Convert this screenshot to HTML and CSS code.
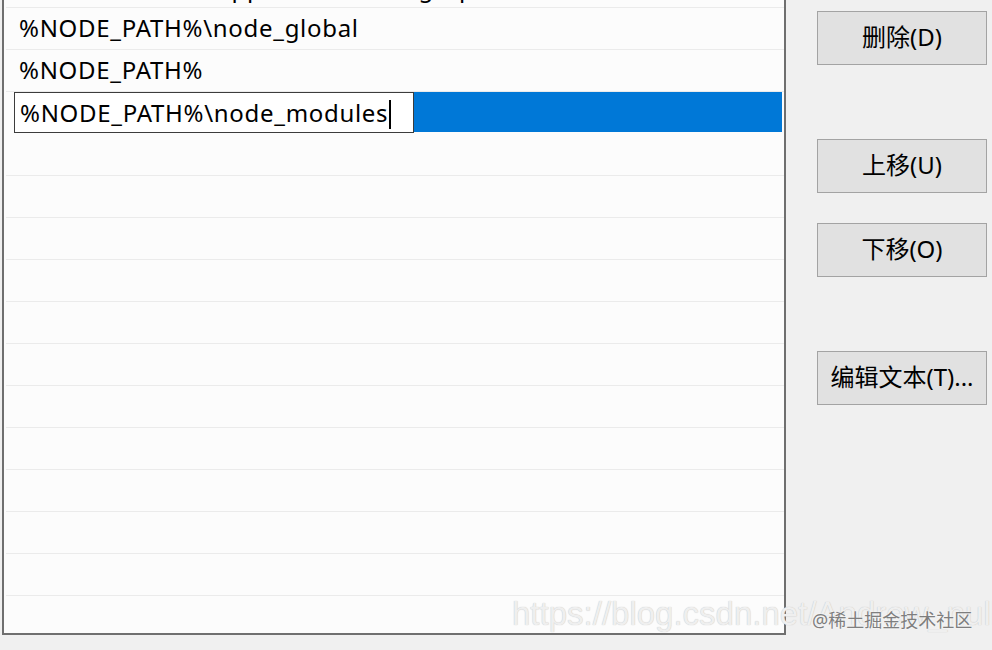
FILE: index.html
```html
<!DOCTYPE html>
<html lang="zh-CN">
<head>
    <meta charset="UTF-8">
    <title>编辑环境变量</title>
    <link rel="stylesheet" href="styles.css">
</head>
<body>
    <div class="dialogo">
        <div class="lista">
            <div class="fila fila-cortada">C:\Users\Admin\AppData\Roaming\npm</div>
            <div class="fila">%NODE_PATH%\node_global</div>
            <div class="fila">%NODE_PATH%</div>
            <div class="fila seleccionada">
                <div class="editor">%NODE_PATH%\node_modules<span class="cursor"></span></div>
                <div class="relleno"></div>
            </div>
            <div class="fila"></div>
            <div class="fila"></div>
            <div class="fila"></div>
            <div class="fila"></div>
            <div class="fila"></div>
            <div class="fila"></div>
            <div class="fila"></div>
            <div class="fila"></div>
            <div class="fila"></div>
            <div class="fila"></div>
            <div class="fila"></div>
            <div class="fila"></div>
        </div>

        <div class="botones">
            <button class="boton boton-borrar">删除(D)</button>
            <button class="boton boton-subir">上移(U)</button>
            <button class="boton boton-bajar">下移(O)</button>
            <button class="boton boton-texto">编辑文本(T)...</button>
        </div>
    </div>

    <div class="marca">https://blog.csdn.net/Andrew_null</div>
    <div class="marca-sitio">@稀土掘金技术社区</div>
</body>
</html>
```

FILE: styles.css
```css
body {
    margin: 0;
    background-color: #f0f0f0;
    font-family: "Noto Sans", "Noto Sans CJK SC", sans-serif;
    overflow: hidden;
}
.dialogo {
    display: flex;
    align-items: flex-start;
}
.lista {
    margin-top: -36px;
    margin-left: 2px;
    width: 784px;
    height: 671px;
    box-sizing: border-box;
    border: 2px solid #6f6f6f;
    background-color: #fcfcfc;
    overflow: hidden;
}
.fila {
    height: 42px;
    box-sizing: border-box;
    margin-left: 2px;
    border-bottom: 1px solid #ebebeb;
    padding-left: 13px;
    font-size: 24px;
    letter-spacing: 0.7px;
    line-height: 40px;
    color: #000;
    white-space: nowrap;
}
.fila-cortada {
    padding-top: 2px;
}
.fila.seleccionada {
    display: flex;
    align-items: flex-start;
    padding-left: 8px;
    margin-right: 2px;
    border-bottom: none;
}
.editor {
    width: 400px;
    height: 41px;
    box-sizing: border-box;
    border: 1px solid #3c3c3c;
    background-color: #fff;
    padding-left: 5px;
    line-height: 39px;
}
.relleno {
    flex: 1;
    height: 40px;
    background-color: #0078d7;
}
.cursor {
    display: inline-block;
    width: 2px;
    height: 29px;
    margin-left: 1px;
    vertical-align: -7px;
    background-color: #000;
}
.botones {
    display: flex;
    flex-direction: column;
    padding-left: 31px;
    padding-top: 11px;
}
.boton {
    width: 170px;
    height: 54px;
    border: 1px solid #a3a3a3;
    background-color: #e1e1e1;
    font-family: "Noto Sans", "Noto Sans CJK SC", sans-serif;
    font-size: 24px;
    color: #000;
    padding: 0 0 5px 0;
}
.boton-subir {
    margin-top: 74px;
}
.boton-bajar {
    margin-top: 30px;
}
.boton-texto {
    margin-top: 74px;
}
.marca {
    position: absolute;
    left: 512px;
    top: 595px;
    font-family: "Liberation Sans", sans-serif;
    font-size: 33px;
    color: #efefef;
    text-shadow: 0 0 1px #b9b9b9;
    white-space: nowrap;
}
.marca-sitio {
    position: absolute;
    left: 812px;
    top: 606px;
    font-size: 18px;
    color: #7e7e7e;
    text-shadow: 0 0 2px #fff;
    white-space: nowrap;
}
```
